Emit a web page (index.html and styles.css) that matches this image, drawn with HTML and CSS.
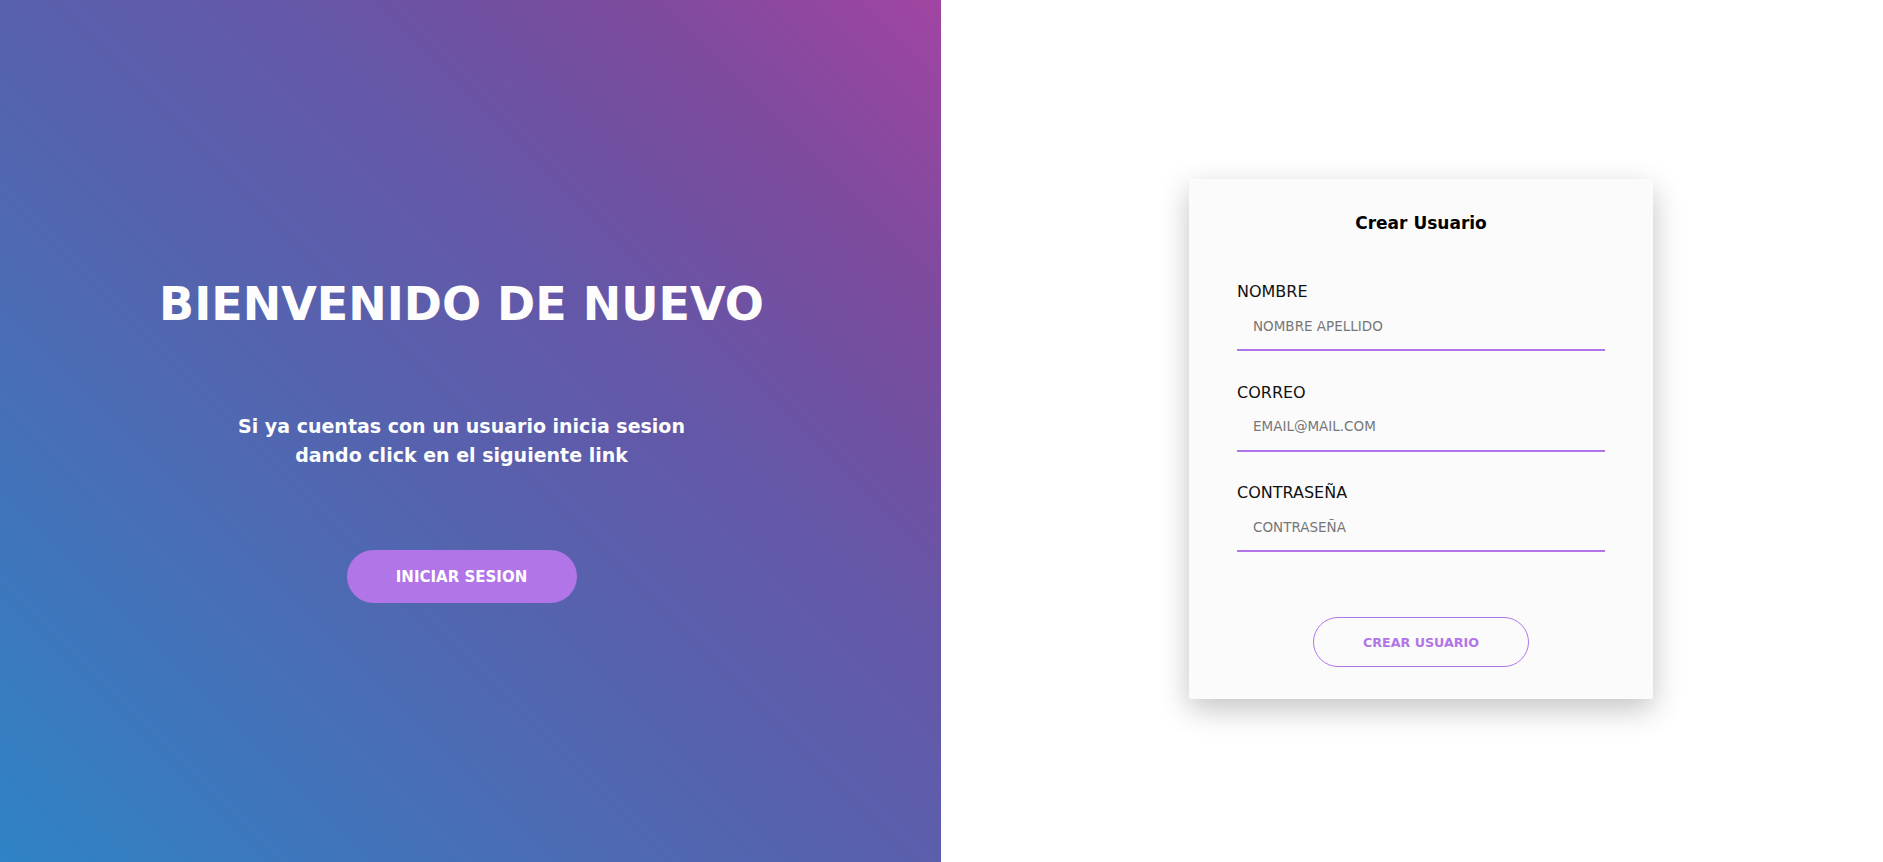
FILE: index.html
```html
<!DOCTYPE html>
<html lang="es">
<head>
<meta charset="utf-8">
<title>Crear Usuario</title>
<link rel="stylesheet" href="styles.css">
</head>
<body>
<main class="page">
  <section class="welcome">
    <h1 class="welcome-title">BIENVENIDO DE NUEVO</h1>
    <p class="welcome-text">Si ya cuentas con un usuario inicia sesion dando click en el siguiente link</p>
    <a class="btn-login" href="#">INICIAR SESION</a>
  </section>
  <section class="register">
    <form class="card">
      <h2 class="card-title">Crear Usuario</h2>
      <div class="fields">
        <div class="field">
          <label class="field-label" for="nombre">NOMBRE</label>
          <input class="field-input" id="nombre" type="text" placeholder="NOMBRE APELLIDO">
        </div>
        <div class="field">
          <label class="field-label" for="correo">CORREO</label>
          <input class="field-input" id="correo" type="email" placeholder="EMAIL@MAIL.COM">
        </div>
        <div class="field">
          <label class="field-label" for="pass">CONTRASEÑA</label>
          <input class="field-input" id="pass" type="password" placeholder="CONTRASEÑA">
        </div>
      </div>
      <div class="actions">
        <button class="btn-create" type="button">CREAR USUARIO</button>
      </div>
    </form>
  </section>
</main>
</body>
</html>
```

FILE: styles.css
```css
* {
  box-sizing: border-box;
}

html, body {
  margin: 0;
  padding: 0;
  height: 100%;
}

body {
  font-family: "DejaVu Sans", "Liberation Sans", sans-serif;
  background: #ffffff;
  color: #000;
}

.page {
  display: flex;
  width: 100%;
  height: 862px;
}

.welcome {
  flex: 0 0 941px;
  display: flex;
  flex-direction: column;
  align-items: center;
  padding: 276px 18px 0 0;
  background: linear-gradient(45deg, #2f83c6 0%, #4e69b2 35%, #6358a8 62%, #7b4b9e 82%, #a145a1 100%);
  color: #fff;
}

.welcome-title {
  margin: 0;
  font-size: 46px;
  line-height: 56px;
  font-weight: bold;
  color: #fdfdfd;
}

.welcome-text {
  margin: 80px 0 0;
  max-width: 470px;
  font-size: 19px;
  line-height: 29px;
  font-weight: bold;
  text-align: center;
  color: #fdfdfd;
}

.btn-login {
  margin-top: 80px;
  width: 230px;
  height: 53px;
  border-radius: 27px;
  background: #b175e8;
  color: #fff;
  font-size: 15px;
  font-weight: bold;
  text-decoration: none;
  display: flex;
  align-items: center;
  justify-content: center;
}

.register {
  flex: 1;
  display: flex;
  justify-content: center;
  align-items: flex-start;
  padding: 179px 0 0 18px;
}

.card {
  width: 464px;
  background: #fbfbfb;
  border-radius: 2px;
  box-shadow: 0 10px 30px rgba(0, 0, 0, 0.24);
  padding: 34px 48px 32px;
  display: flex;
  flex-direction: column;
}

.card-title {
  margin: 0 0 49px;
  font-size: 17px;
  line-height: 20px;
  font-weight: bold;
  text-align: center;
}

.fields {
  display: flex;
  flex-direction: column;
  gap: 31.5px;
}

.field {
  display: flex;
  flex-direction: column;
}

.field-label {
  font-size: 16px;
  line-height: 20px;
  color: #111;
}

.field-input {
  height: 49px;
  border: none;
  border-bottom: 2px solid #b175e8;
  background: transparent;
  padding: 0 16px;
  font-family: "DejaVu Sans", "Liberation Sans", sans-serif;
  font-size: 13.5px;
  outline: none;
}

.field-input::placeholder {
  color: #777777;
}

.actions {
  display: flex;
  justify-content: center;
  margin-top: 65px;
}

.btn-create {
  width: 216px;
  height: 50px;
  border: 1px solid #b175e8;
  border-radius: 25px;
  background: transparent;
  color: #b175e8;
  font-family: "DejaVu Sans", "Liberation Sans", sans-serif;
  font-size: 12.7px;
  font-weight: bold;
  cursor: pointer;
}
```
